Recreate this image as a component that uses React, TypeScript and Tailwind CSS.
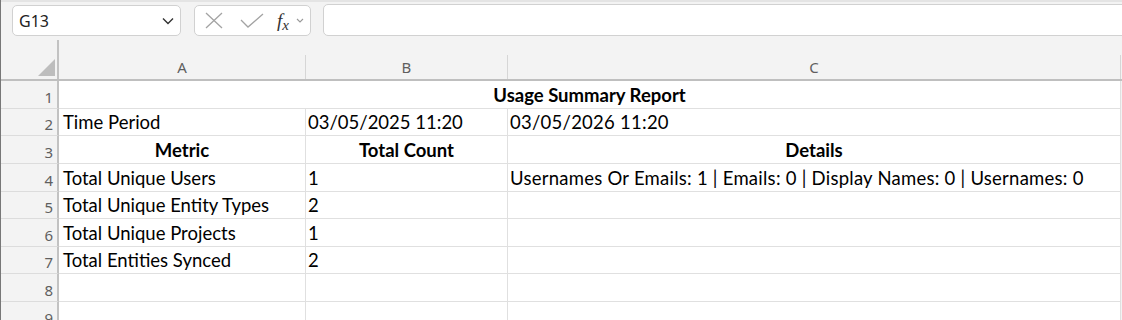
const rows: { h: string; a: string; b: string; c: string; kind?: string }[] = [
  { h: "h-[28px]", a: "", b: "", c: "", kind: "title" },
  { h: "h-[27px]", a: "Time Period", b: "03/05/2025 11:20", c: "03/05/2026 11:20" },
  { h: "h-[28px]", a: "Metric", b: "Total Count", c: "Details", kind: "head" },
  { h: "h-[28px]", a: "Total Unique Users", b: "1", c: "Usernames Or Emails: 1 | Emails: 0 | Display Names: 0 | Usernames: 0" },
  { h: "h-[27px]", a: "Total Unique Entity Types", b: "2", c: "" },
  { h: "h-[28px]", a: "Total Unique Projects", b: "1", c: "" },
  { h: "h-[27px]", a: "Total Entities Synced", b: "2", c: "" },
  { h: "h-[28px]", a: "", b: "", c: "" },
  { h: "h-[28px]", a: "", b: "", c: "" },
];

const cellFont = "font-['Lato',_'Liberation_Sans',_sans-serif] text-[18.5px] text-black";
const uiFont = "font-['Noto_Sans',_'Open_Sans',_sans-serif]";

const App = () => {
  return (
    <div className="w-[1122px] h-[320px] overflow-hidden bg-[#f3f3f3] border-l border-[#777]">
      {/* formula bar */}
      <div className="flex h-[40px] pt-[3px] border-t-2 border-[#e4e4e4]">
        <div className={`shrink-0 ml-[11px] w-[169px] h-[31px] bg-white border border-[#d1d1d1] rounded-[5px] flex items-center justify-between pl-[6px] pr-[6px] ${uiFont} text-[16px] text-[#222]`}>
          <span>G13</span>
          <svg width="12" height="8" viewBox="0 0 12 8">
            <path d="M1 1.5 L6 6.5 L11 1.5" fill="none" stroke="#333" strokeWidth="1.4" />
          </svg>
        </div>
        <div className="shrink-0 ml-[13px] w-[117px] h-[31px] bg-white border border-[#d1d1d1] rounded-[5px] flex items-center pl-[10px]">
          <svg width="18" height="17" viewBox="0 0 18 17">
            <path d="M1 1 L17 16 M17 1 L1 16" fill="none" stroke="#a3a3a3" strokeWidth="1.3" />
          </svg>
          <svg width="24" height="16" viewBox="0 0 24 16" className="ml-[17px]">
            <path d="M1 7 L8 14 L23 1" fill="none" stroke="#a3a3a3" strokeWidth="1.3" />
          </svg>
          <span className="ml-[13px] flex items-end text-[#333] font-['Liberation_Serif',_serif] leading-none">
            <span className="italic text-[19px]">f</span>
            <span className="italic text-[15px] -mb-[3px]">x</span>
          </span>
          <svg width="8" height="5" viewBox="0 0 8 5" className="ml-[7px]">
            <path d="M1 1 L4 4 L7 1" fill="none" stroke="#999" strokeWidth="1.1" />
          </svg>
        </div>
        <div className="shrink-0 ml-[12px] w-[820px] h-[32px] -mt-[1px] bg-white border border-[#d1d1d1] rounded-[5px]" />
      </div>

      {/* column headers */}
      <div className="flex h-[41px] border-b-2 border-[#bfbfbf]">
        <div className="shrink-0 w-[58px] border-r-2 border-[#c2c2c2] flex items-end justify-end pr-[2px] pb-[3px]">
          <svg width="17" height="17" viewBox="0 0 17 17">
            <path d="M17 0 L17 17 L0 17 Z" fill="#bdbdbd" />
          </svg>
        </div>
        {[
          { l: "A", w: "w-[247px]" },
          { l: "B", w: "w-[202px]" },
          { l: "C", w: "w-[613px]" },
        ].map((c) => (
          <div key={c.l} className={`shrink-0 ${c.w} flex flex-col`}>
            <div className="h-[15px]" />
            <div className={`flex-1 border-r border-[#d6d6d6] flex items-center justify-center ${uiFont} text-[15px] text-[#5f5f5f]`}>
              {c.l}
            </div>
          </div>
        ))}
      </div>

      {/* grid */}
      {rows.map((r, i) => (
        <div key={i} className={`flex ${r.h}`}>
          <div className={`shrink-0 w-[58px] border-r-2 border-r-[#c2c2c2] border-b border-b-[#dcdcdc] flex items-end justify-end pr-[4px] pb-[3px] ${uiFont} text-[15px] text-[#5f5f5f] leading-none`}>
            {i + 1}
          </div>
          {r.kind === "title" ? (
            <div className={`shrink-0 w-[1062px] bg-white border-r border-b border-[#e0e0e0] flex items-end justify-center pb-[4px] ${cellFont} font-bold leading-none`}>
              Usage Summary Report
            </div>
          ) : (
            <>
              <div className={`shrink-0 w-[247px] bg-white border-r border-b border-[#e0e0e0] flex items-end pb-[4px] leading-none ${cellFont} ${r.kind === "head" ? "justify-center font-bold" : "pl-[4px]"}`}>
                {r.a}
              </div>
              <div className={`shrink-0 w-[202px] bg-white border-r border-b border-[#e0e0e0] flex items-end pb-[4px] leading-none ${cellFont} ${r.kind === "head" ? "justify-center font-bold" : "pl-[2px]"}`}>
                {r.b}
              </div>
              <div className={`shrink-0 w-[613px] bg-white border-r border-b border-[#e0e0e0] flex items-end pb-[4px] leading-none whitespace-nowrap ${cellFont} ${r.kind === "head" ? "justify-center font-bold" : "pl-[2px] tracking-[0.25px]"}`}>
                {r.c}
              </div>
            </>
          )}
        </div>
      ))}
    </div>
  );
};

export default App;
